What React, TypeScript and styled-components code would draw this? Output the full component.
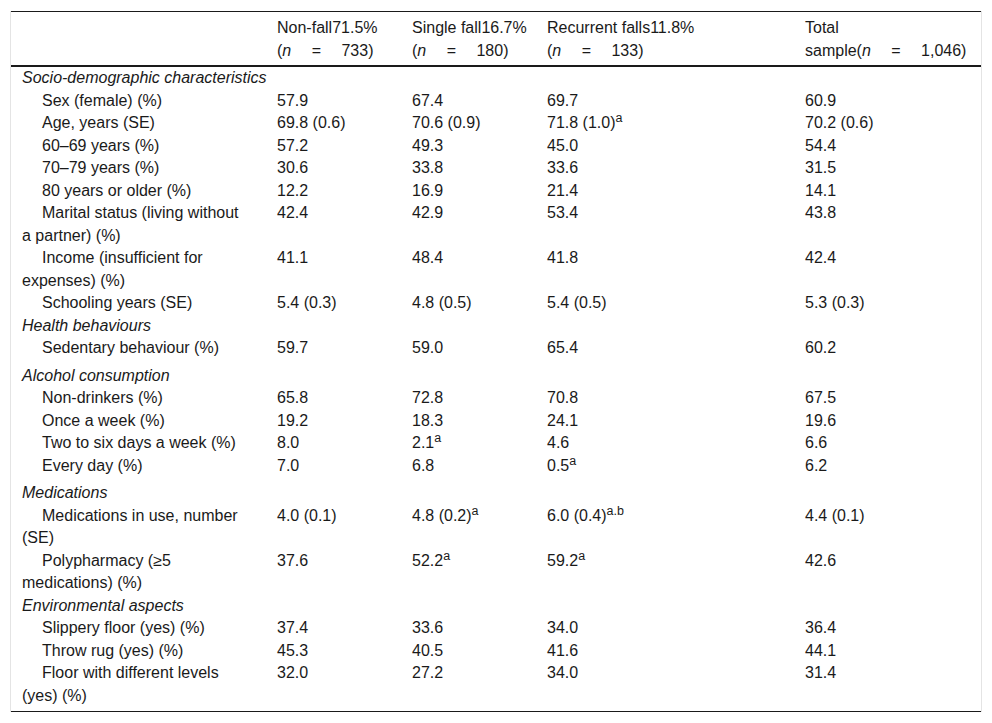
import styled, { createGlobalStyle } from 'styled-components';

type Cell = string | [string, string];

interface GroupRow {
  kind: 'group';
  label: string;
}

interface ItemRow {
  kind: 'item';
  label: string;
  values: Cell[];
  spaced?: boolean;
}

type Row = GroupRow | ItemRow;

const GlobalStyle = createGlobalStyle`
  html, body {
    margin: 0;
    padding: 0;
    background: #ffffff;
  }
  body {
    font-family: "Liberation Sans", Arial, Helvetica, sans-serif;
    color: #1a1a1a;
  }
`;

const Frame = styled.div`
  margin: 11px 10px 0 10px;
  border-left: 1px solid #e4e4e4;
  border-right: 1px solid #e4e4e4;
`;

const Table = styled.table`
  width: 100%;
  border-collapse: collapse;
  table-layout: fixed;
  font-size: 16px;
  line-height: 22.5px;
  border-top: 1px solid #1a1a1a;
  border-bottom: 1px solid #1a1a1a;
`;

const HeadCell = styled.th`
  text-align: left;
  font-weight: normal;
  vertical-align: top;
  white-space: nowrap;
  padding: 5px 4px 3px 11px;
  border-bottom: 2px solid #1a1a1a;
`;

const GroupCell = styled.td`
  font-style: italic;
  padding: 0 11px;
`;

const LabelCell = styled.td<{ $spaced?: boolean; $last?: boolean }>`
  vertical-align: top;
  padding: 0 22px ${p => (p.$last ? '4px' : p.$spaced ? '5px' : '0')} 11px;
  text-indent: 20px;
`;

const ValueCell = styled.td<{ $spaced?: boolean; $last?: boolean }>`
  vertical-align: top;
  padding: 0 4px ${p => (p.$last ? '4px' : p.$spaced ? '5px' : '0')} 11px;
`;

const Sup = styled.sup`
  font-size: 12.5px;
  line-height: 0;
  vertical-align: 6px;
`;

const Em = styled.i`
  font-style: italic;
`;

// "n = value" in the header is spread with wide non-breaking spaces
const SP = '\u00a0\u2003=\u2003\u00a0';

const rows: Row[] = [
  { kind: 'group', label: 'Socio-demographic characteristics' },
  { kind: 'item', label: 'Sex (female) (%)', values: ['57.9', '67.4', '69.7', '60.9'] },
  { kind: 'item', label: 'Age, years (SE)', values: ['69.8 (0.6)', '70.6 (0.9)', ['71.8 (1.0)', 'a'], '70.2 (0.6)'] },
  { kind: 'item', label: '60–69 years (%)', values: ['57.2', '49.3', '45.0', '54.4'] },
  { kind: 'item', label: '70–79 years (%)', values: ['30.6', '33.8', '33.6', '31.5'] },
  { kind: 'item', label: '80 years or older (%)', values: ['12.2', '16.9', '21.4', '14.1'] },
  { kind: 'item', label: 'Marital status (living without a partner) (%)', values: ['42.4', '42.9', '53.4', '43.8'] },
  { kind: 'item', label: 'Income (insufficient for expenses) (%)', values: ['41.1', '48.4', '41.8', '42.4'] },
  { kind: 'item', label: 'Schooling years (SE)', values: ['5.4 (0.3)', '4.8 (0.5)', '5.4 (0.5)', '5.3 (0.3)'] },
  { kind: 'group', label: 'Health behaviours' },
  { kind: 'item', label: 'Sedentary behaviour (%)', values: ['59.7', '59.0', '65.4', '60.2'], spaced: true },
  { kind: 'group', label: 'Alcohol consumption' },
  { kind: 'item', label: 'Non-drinkers (%)', values: ['65.8', '72.8', '70.8', '67.5'] },
  { kind: 'item', label: 'Once a week (%)', values: ['19.2', '18.3', '24.1', '19.6'] },
  { kind: 'item', label: 'Two to six days a week (%)', values: ['8.0', ['2.1', 'a'], '4.6', '6.6'] },
  { kind: 'item', label: 'Every day (%)', values: ['7.0', '6.8', ['0.5', 'a'], '6.2'], spaced: true },
  { kind: 'group', label: 'Medications' },
  { kind: 'item', label: 'Medications in use, number (SE)', values: ['4.0 (0.1)', ['4.8 (0.2)', 'a'], ['6.0 (0.4)', 'a.b'], '4.4 (0.1)'] },
  { kind: 'item', label: 'Polypharmacy (≥5 medications) (%)', values: ['37.6', ['52.2', 'a'], ['59.2', 'a'], '42.6'] },
  { kind: 'group', label: 'Environmental aspects' },
  { kind: 'item', label: 'Slippery floor (yes) (%)', values: ['37.4', '33.6', '34.0', '36.4'] },
  { kind: 'item', label: 'Throw rug (yes) (%)', values: ['45.3', '40.5', '41.6', '44.1'] },
  { kind: 'item', label: 'Floor with different levels (yes) (%)', values: ['32.0', '27.2', '34.0', '31.4'] },
];

function renderCell(cell: Cell) {
  if (typeof cell === 'string') return cell;
  return (
    <>
      {cell[0]}
      <Sup>{cell[1]}</Sup>
    </>
  );
}

export default function App() {
  return (
    <>
      <GlobalStyle />
      <Frame>
        <Table>
          <colgroup>
            <col style={{ width: 255 }} />
            <col style={{ width: 135 }} />
            <col style={{ width: 135 }} />
            <col style={{ width: 258 }} />
            <col />
          </colgroup>
          <thead>
            <tr>
              <HeadCell />
              <HeadCell>
                Non-fall71.5%
                <br />(<Em>n</Em>{SP}733)
              </HeadCell>
              <HeadCell>
                Single fall16.7%
                <br />(<Em>n</Em>{SP}180)
              </HeadCell>
              <HeadCell>
                Recurrent falls11.8%
                <br />(<Em>n</Em>{SP}133)
              </HeadCell>
              <HeadCell>
                Total
                <br />sample(<Em>n</Em>{SP}1,046)
              </HeadCell>
            </tr>
          </thead>
          <tbody>
            {rows.map((row, i) => {
              const last = i === rows.length - 1;
              if (row.kind === 'group') {
                return (
                  <tr key={row.label}>
                    <GroupCell colSpan={5}>{row.label}</GroupCell>
                  </tr>
                );
              }
              return (
                <tr key={row.label}>
                  <LabelCell $spaced={row.spaced} $last={last}>
                    {row.label}
                  </LabelCell>
                  {row.values.map((v, j) => (
                    <ValueCell key={j} $spaced={row.spaced} $last={last}>
                      {renderCell(v)}
                    </ValueCell>
                  ))}
                </tr>
              );
            })}
          </tbody>
        </Table>
      </Frame>
    </>
  );
}
